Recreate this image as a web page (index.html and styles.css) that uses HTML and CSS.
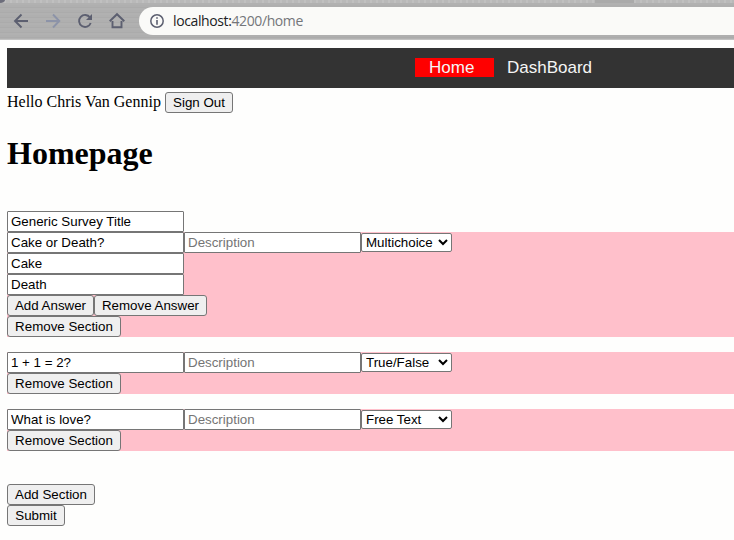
FILE: index.html
```html
<!DOCTYPE html>
<html lang="en">
<head>
<meta charset="utf-8">
<title>Homepage</title>
<link rel="stylesheet" href="styles.css">
</head>
<body>
<header class="browser">
  <div class="tabstrip"><i class="tab-corner"></i><i class="active-tab"></i></div>
  <div class="toolbar">
    <svg class="controls" width="139" height="28" viewBox="0 0 139 28" fill="none" stroke="#5c5f70" stroke-width="1.9">
      <path d="M28 14H15M21.500 7.500L15 14L21.500 20.500"/>
      <path stroke="#8c93a8" d="M46 14H59M53 7.500L59.300 14L53 20.500"/>
      <path d="M90 10.500A6 6 0 1 0 90.700 16"/>
      <path d="M92 7V13H86Z" fill="#5c5f70" stroke="none"/>
      <path d="M112.500 14V20.200H121.500V14M109.700 14.300L117 7.200L124.300 14.300"/>
    </svg>
    <div class="address">
      <svg class="info" width="14" height="14" viewBox="0 0 14 14"><circle cx="7" cy="7" r="6.200" fill="none" stroke="#5c5f70" stroke-width="1.500"/><path d="M6.200 3.200h1.600v1.600H6.200zM6.200 6h1.600v4.800H6.200z" fill="#5c5f70"/></svg>
      <span class="url">localhost:<span class="path">4200/home</span></span>
    </div>
  </div>
</header>
<main>
  <nav><a class="active">Home</a><a>DashBoard</a></nav>
  <div class="greeting"><span>Hello Chris Van Gennip</span><button class="sign-out">Sign Out</button></div>
  <h1>Homepage</h1>
  <form>
    <div class="row"><input value="Generic Survey Title"></div>
    <section>
      <div class="row"><input value="Cake or Death?"><input placeholder="Description"><select><option>Multichoice</option></select></div>
      <div class="row"><input value="Cake"></div>
      <div class="row"><input value="Death"></div>
      <div class="row"><button class="add-answer">Add Answer</button><button class="remove-answer">Remove Answer</button></div>
      <div class="row"><button class="remove-section">Remove Section</button></div>
    </section>
    <section>
      <div class="row"><input value="1 + 1 = 2?"><input placeholder="Description"><select><option>True/False</option></select></div>
      <div class="row"><button class="remove-section">Remove Section</button></div>
    </section>
    <section>
      <div class="row"><input value="What is love?"><input placeholder="Description"><select><option>Free Text</option></select></div>
      <div class="row"><button class="remove-section">Remove Section</button></div>
    </section>
    <div class="actions">
      <div class="row"><button class="add-section">Add Section</button></div>
      <div class="row"><button class="submit">Submit</button></div>
    </div>
  </form>
</main>
</body>
</html>
```
FILE: styles.css
```css
* { box-sizing: border-box; }
body {
  margin: 0;
  height: 540px;
  overflow: hidden;
  background: #fefefd;
  color: #000;
  font-family: "Liberation Serif", serif;
}
.browser {
  height: 40px;
  background: repeating-linear-gradient(#afafaf 0 2px, #ababab 2px 3px, #b1b1b1 3px 5px);
  border-bottom: 1px solid #c2c2c2;
}
.tabstrip {
  display: flex;
  justify-content: space-between;
  height: 3px;
  background: repeating-linear-gradient(90deg, #b9b9b9 0 4px, #c0c0c0 4px 6px);
}
.tab-corner {
  width: 5px;
  height: 3px;
  background: #6c6d7b;
  border-bottom-right-radius: 5px 3px;
}
.active-tab {
  width: 39px;
  height: 3px;
  margin-right: 100px;
  background: #aaa;
}
.toolbar {
  display: flex;
  padding-top: 4px;
}
.controls { flex: none; }
.address {
  display: flex;
  align-items: center;
  flex: 1;
  height: 28px;
  padding-left: 11px;
  border-radius: 14px 0 0 14px;
  background: #fafaf8;
}
.url {
  margin-left: 9px;
  font: 14px/20px "Open Sans", sans-serif;
  letter-spacing: -0.39px;
  color: #202124;
}
.path { color: #74767a; }
main { padding: 8px 0 0 7px; }
nav {
  display: flex;
  align-items: flex-start;
  height: 40px;
  padding: 10px 0 0 408px;
  background: #333;
}
nav a {
  height: 19px;
  color: #f5f5f5;
  font: 17px/19px "Liberation Sans", Arial, sans-serif;
}
nav .active {
  width: 79px;
  margin-right: 13px;
  padding-left: 14px;
  background: red;
}
.greeting {
  display: flex;
  gap: 4px;
  height: 25px;
  padding-top: 4px;
  font-size: 16px;
  line-height: 20px;
}
.greeting span { width: 154px; white-space: nowrap; }
h1 {
  margin: 21px 0 39px;
  font-size: 32px;
  line-height: 38px;
}
.row { display: flex; height: 21px; }
section { margin-bottom: 15px; background: pink; }
input, button, select {
  margin: 0;
  font: 13.333px "Liberation Sans", Arial, sans-serif;
  color: #000;
  border: 1px solid #767676;
}
input {
  width: 177px;
  height: 21px;
  padding: 1px 3px;
  background: #fff;
  border-radius: 1px;
}
input::placeholder { color: #757575; }
select {
  width: 91px;
  height: 19px;
  margin-top: 1px;
  background: #fff;
  border-radius: 2px;
}
button {
  height: 21px;
  padding: 0;
  background: #efefef;
  border-radius: 3px;
  white-space: nowrap;
}
.sign-out { width: 68px; }
.add-answer { width: 87px; }
.remove-answer { width: 113px; }
.remove-section { width: 114px; }
.add-section { width: 88px; }
.submit { width: 58px; }
.actions { padding-top: 18px; }
```
